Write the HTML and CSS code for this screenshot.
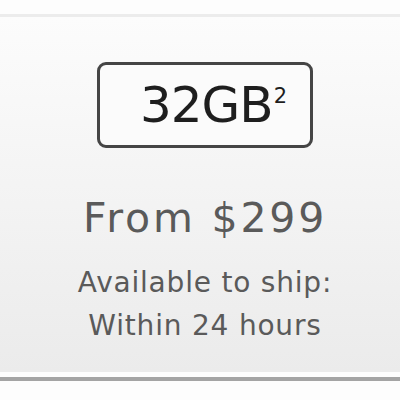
FILE: index.html
```html
<!DOCTYPE html>
<html lang="en">
<head>
    <meta charset="UTF-8">
    <title>32GB - From $299</title>
    <link rel="stylesheet" href="styles.css">
</head>
<body>
    <div class="top-rule"></div>
    <div class="product">
        <div class="capacity">32GB<sup>2</sup></div>
        <p class="price">From $299</p>
        <p class="ship">Available to ship:<br>Within 24 hours</p>
    </div>
    <div class="bottom-rule"></div>
</body>
</html>
```

FILE: styles.css
```css
body { margin: 0; background-color: #fdfdfd; font-family: 'DejaVu Sans', sans-serif; color: #5a5a5a; }
.top-rule { height: 14px; border-bottom: 3px solid #ececec; }
.product { height: 355px; padding-left: 10px; box-sizing: border-box; background: linear-gradient(#fcfcfc, #ebebeb); display: flex; flex-direction: column; align-items: center; }
.capacity { margin-top: 45px; width: 216px; height: 86px; box-sizing: border-box; border: 3px solid #454545; border-radius: 9px; background-color: #fbfbfb; font-size: 50px; color: #1e1e1e; line-height: 80px; padding-left: 40px; letter-spacing: -1px; }
.capacity sup { font-size: 21px; vertical-align: top; line-height: 20px; position: relative; top: 21px; left: 1px; letter-spacing: 0; }
.price { margin: 46px 0 0; font-size: 41px; line-height: 48px; letter-spacing: 2.8px; }
.ship { margin: 19px 0 0; font-size: 28px; line-height: 43px; letter-spacing: 0.8px; text-align: center; }
.bottom-rule { height: 5px; background-color: #fdfdfd; border-bottom: 4px solid #a4a4a4; }
```
